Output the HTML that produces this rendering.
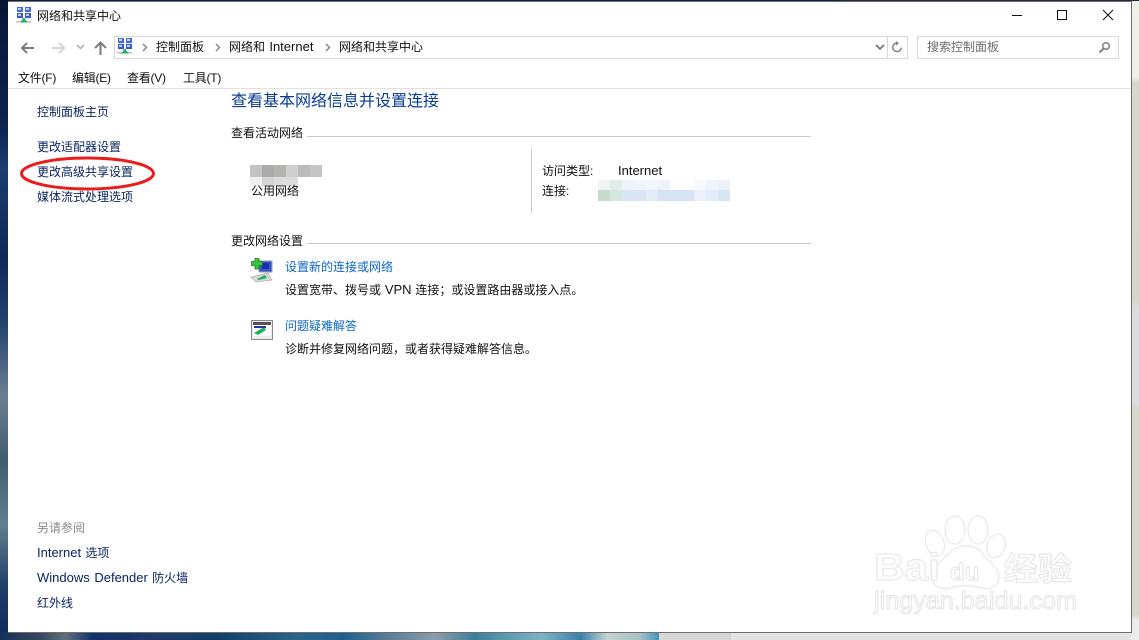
<!DOCTYPE html>
<html lang="zh-CN"><head><meta charset="utf-8"><style>
html,body{margin:0;padding:0}
body{width:1139px;height:640px;position:relative;overflow:hidden;background:#0c2048;font-family:"Liberation Sans","Noto Sans CJK SC",sans-serif;font-size:12px;color:#111}
div,span.t{position:absolute}
.t{white-space:nowrap;line-height:16px;font-size:12px}
.t i{font-style:normal;font-size:13px}
.n{color:#0a2560}
.l{color:#0a66c8}
.b{position:absolute}
</style></head><body>
<!-- wallpaper -->
<div style="left:0;top:0;width:8px;height:640px;background:linear-gradient(180deg,#071634 0,#0c2450 20%,#1a3e70 26%,#0e2a58 40%,#20406a 50%,#6a7f92 62%,#3f5d70 72%,#5f8090 82%,#1e3e68 92%,#0c2a58 100%)"></div>
<div style="left:0;top:632px;width:660px;height:8px;background:linear-gradient(90deg,#14305a 0,#36485e 6%,#61707c 10%,#12306a 14%,#22386a 24%,#104068 33%,#2d6488 45%,#1e5f90 52%,#5c7f96 59%,#8b9cac 66%,#3d8098 72%,#7fb4c6 82%,#3a7fa8 88%,#c7d2d2 92%,#a5c0c6 97%,#3d90b8 100%)"></div>
<div style="left:659px;top:632px;width:72px;height:8px;background:#d6d6d6"></div>
<div style="left:731px;top:632px;width:408px;height:8px;background:#e4e4e4"></div>
<div style="left:1131px;top:0;width:8px;height:640px;background:linear-gradient(180deg,#f0efe8 0,#f0efe8 12%,#d8d8cc 13%,#d6d6ca 47%,#dcdce0 48%,#dcdce0 63%,#d8d8cc 64%,#d8d8cc 96%,#ececec 97%)"></div>
<div style="left:840px;top:0;width:299px;height:1px;background:#1c2a3a"></div>
<!-- window -->
<div style="left:8px;top:1px;width:1123px;height:631px;background:#fff"></div>
<div style="left:1131px;top:1px;width:1px;height:632px;background:#6e6e6e"></div>
<div style="left:8px;top:632px;width:1124px;height:1px;background:#6e6e6e"></div>
<div style="left:8px;top:1px;width:1123px;height:1px;background:#6e6e6e"></div>

<!-- title icon -->
<svg class="b" style="left:16px;top:7px" width="16" height="16" viewBox="0 0 16 16">
<rect x="1" y="0" width="6" height="5" fill="#4a68d8"/><rect x="9" y="0" width="6" height="5" fill="#4a68d8"/><rect x="1" y="6" width="6" height="5" fill="#3a58d0"/><rect x="9" y="6" width="6" height="5" fill="#3a58d0"/>
<rect x="2" y="1" width="3" height="2" fill="#b8dcf8"/><rect x="10" y="1" width="3" height="2" fill="#b8dcf8"/><rect x="2" y="7" width="3" height="2" fill="#b8dcf8"/><rect x="10" y="7" width="3" height="2" fill="#b8dcf8"/>
<rect x="0" y="14" width="15" height="1.500" fill="#c0c0c0"/><path d="M4 15.500 L6.500 12.500 L6.500 11 L9 11 L9 12.500 L12 15.500Z" fill="#22b060"/></svg>
<span class="t" style="left:37px;top:8px">网络和共享中心</span>

<!-- window buttons -->
<div style="left:1012px;top:15px;width:10px;height:1px;background:#111"></div>
<div style="left:1057px;top:10px;width:8px;height:8px;border:1px solid #111"></div>
<svg class="b" style="left:1102px;top:9px" width="12" height="12" viewBox="0 0 12 12"><path d="M1 1L11 11M11 1L1 11" stroke="#111" stroke-width="1" fill="none"/></svg>

<!-- nav -->
<svg class="b" style="left:20px;top:41px" width="16" height="14" viewBox="0 0 16 14"><path d="M7 2L2 7L7 12M2 7H14" stroke="#7a7a7a" stroke-width="2" fill="none"/></svg>
<svg class="b" style="left:50px;top:41px" width="16" height="14" viewBox="0 0 16 14"><path d="M9 2L14 7L9 12M14 7H2" stroke="#d4d4d4" stroke-width="2" fill="none"/></svg>
<svg class="b" style="left:76px;top:44px" width="9" height="7" viewBox="0 0 9 7"><path d="M1 1L4.500 4.500L8 1" stroke="#a8a8a8" stroke-width="1.500" fill="none"/></svg>
<svg class="b" style="left:93px;top:41px" width="15" height="15" viewBox="0 0 15 15"><path d="M2 7L7.500 1.500L13 7M7.500 2V14" stroke="#7a7a7a" stroke-width="2" fill="none"/></svg>

<div style="left:114px;top:36px;width:772px;height:21px;border:1px solid #d9d9d9"></div>
<div style="left:887px;top:36px;width:20px;height:21px;border:1px solid #d9d9d9;border-left:none"></div>
<svg class="b" style="left:117px;top:38px" width="16" height="16" viewBox="0 0 16 16">
<rect x="1" y="0" width="6" height="5" fill="#4a68d8"/><rect x="9" y="0" width="6" height="5" fill="#4a68d8"/><rect x="1" y="6" width="6" height="5" fill="#3a58d0"/><rect x="9" y="6" width="6" height="5" fill="#3a58d0"/>
<rect x="2" y="1" width="3" height="2" fill="#b8dcf8"/><rect x="10" y="1" width="3" height="2" fill="#b8dcf8"/><rect x="2" y="7" width="3" height="2" fill="#b8dcf8"/><rect x="10" y="7" width="3" height="2" fill="#b8dcf8"/>
<rect x="0" y="14" width="15" height="1.500" fill="#c0c0c0"/><path d="M4 15.500 L6.500 12.500 L6.500 11 L9 11 L9 12.500 L12 15.500Z" fill="#22b060"/></svg>
<svg class="b" style="left:142px;top:43px" width="6" height="9" viewBox="0 0 6 9"><path d="M1 1L4.500 4.500L1 8" stroke="#8a8a8a" stroke-width="1.500" fill="none"/></svg>
<span class="t" style="left:156px;top:39px">控制面板</span>
<svg class="b" style="left:215px;top:43px" width="6" height="9" viewBox="0 0 6 9"><path d="M1 1L4.500 4.500L1 8" stroke="#8a8a8a" stroke-width="1.500" fill="none"/></svg>
<span class="t" style="left:229px;top:39px;word-spacing:1px">网络和 <i>Internet</i></span>
<svg class="b" style="left:325px;top:43px" width="6" height="9" viewBox="0 0 6 9"><path d="M1 1L4.500 4.500L1 8" stroke="#8a8a8a" stroke-width="1.500" fill="none"/></svg>
<span class="t" style="left:339px;top:39px">网络和共享中心</span>
<svg class="b" style="left:875px;top:44px" width="10" height="7" viewBox="0 0 10 7"><path d="M1 1L5 5L9 1" stroke="#707070" stroke-width="1.600" fill="none"/></svg>
<svg class="b" style="left:891px;top:41px" width="12" height="12" viewBox="0 0 12 12"><path d="M6 2A4.300 4.300 0 1 0 10.300 6.500" stroke="#808080" stroke-width="1.500" fill="none"/><path d="M5 0V4.500L8 2.200Z" fill="#808080"/></svg>

<div style="left:917px;top:36px;width:200px;height:21px;border:1px solid #d9d9d9"></div>
<span class="t" style="left:927px;top:39px;color:#6d6d6d">搜索控制面板</span>
<svg class="b" style="left:1098px;top:41px" width="13" height="13" viewBox="0 0 13 13"><circle cx="8" cy="5" r="3.300" stroke="#808080" stroke-width="1.500" fill="none"/><path d="M5.500 7.500L1.500 11.500" stroke="#808080" stroke-width="2"/></svg>

<!-- menu -->
<span class="t" style="left:18px;top:70px;letter-spacing:-.25px">文件(F)</span>
<span class="t" style="left:72px;top:70px;letter-spacing:-.25px">编辑(E)</span>
<span class="t" style="left:127px;top:70px;letter-spacing:-.25px">查看(V)</span>
<span class="t" style="left:183px;top:70px;letter-spacing:-.25px">工具(T)</span>
<div style="left:8px;top:88px;width:1123px;height:1px;background:#e2e2e2"></div>

<!-- left nav -->
<span class="t n" style="left:37px;top:104px">控制面板主页</span>
<span class="t n" style="left:37px;top:139px">更改适配器设置</span>
<span class="t n" style="left:37px;top:164px">更改高级共享设置</span>
<span class="t n" style="left:37px;top:189px">媒体流式处理选项</span>
<svg class="b" style="left:18px;top:155px" width="140" height="38" viewBox="0 0 140 38"><ellipse cx="69.500" cy="18.500" rx="66" ry="15.500" fill="none" stroke="#ec1c1c" stroke-width="3"/></svg>

<span class="t" style="left:37px;top:520px;color:#8a8a8a">另请参阅</span>
<span class="t n" style="left:37px;top:545px;word-spacing:1px"><i>Internet</i> 选项</span>
<span class="t n" style="left:37px;top:570px;word-spacing:1px"><i>Windows Defender</i> 防火墙</span>
<span class="t n" style="left:37px;top:595px">红外线</span>

<!-- main -->
<span class="t" style="left:231px;top:92px;font-size:16px;line-height:20px;color:#0a3c96">查看基本网络信息并设置连接</span>
<span class="t" style="left:231px;top:125px">查看活动网络</span>
<div style="left:307px;top:136px;width:504px;height:1px;background:#c8c8c8"></div>

<div style="left:250px;top:165px;width:12px;height:12px;background:#c4c2c2"></div>
<div style="left:262px;top:165px;width:12px;height:12px;background:#acabad"></div>
<div style="left:274px;top:165px;width:12px;height:12px;background:#b4b3b0"></div>
<div style="left:286px;top:165px;width:12px;height:12px;background:#cfcfd0"></div>
<div style="left:298px;top:165px;width:12px;height:12px;background:#bbbbbd"></div>
<div style="left:310px;top:165px;width:12px;height:12px;background:#c5c5c5"></div>
<div style="left:250px;top:177px;width:12px;height:9px;background:#f0f0f0"></div>
<div style="left:262px;top:177px;width:12px;height:9px;background:#d6d5d6"></div>
<div style="left:274px;top:177px;width:24px;height:9px;background:#dcdcdb"></div>
<span class="t" style="left:251px;top:183px">公用网络</span>

<div style="left:531px;top:149px;width:1px;height:64px;background:#c8c8c8"></div>
<span class="t" style="left:542px;top:163px">访问类型:</span>
<span class="t" style="left:618px;top:163px;font-size:13px">Internet</span>
<span class="t" style="left:542px;top:183px">连接:</span>

<div style="left:598px;top:180px;width:12px;height:10px;background:#f0f4f2"></div>
<div style="left:610px;top:180px;width:12px;height:10px;background:#e2ece8"></div>
<div style="left:622px;top:180px;width:12px;height:10px;background:#eef2f8"></div>
<div style="left:634px;top:180px;width:24px;height:10px;background:#f2f5fb"></div>
<div style="left:658px;top:180px;width:12px;height:10px;background:#eef2fa"></div>
<div style="left:694px;top:180px;width:12px;height:10px;background:#f8f9fd"></div>
<div style="left:706px;top:180px;width:12px;height:10px;background:#f1f4fb"></div>
<div style="left:718px;top:180px;width:12px;height:10px;background:#ebf1f9"></div>
<div style="left:598px;top:190px;width:12px;height:11px;background:#c4dccd"></div>
<div style="left:610px;top:190px;width:12px;height:11px;background:#d8e6e2"></div>
<div style="left:622px;top:190px;width:24px;height:11px;background:#d9e5f4"></div>
<div style="left:646px;top:190px;width:12px;height:11px;background:#e2ecf6"></div>
<div style="left:658px;top:190px;width:36px;height:11px;background:#d5e3f5"></div>
<div style="left:694px;top:190px;width:12px;height:11px;background:#ebf0f9"></div>
<div style="left:706px;top:190px;width:12px;height:11px;background:#e3ecf8"></div>
<div style="left:718px;top:190px;width:12px;height:11px;background:#d9e6f6"></div>

<span class="t" style="left:231px;top:233px">更改网络设置</span>
<div style="left:307px;top:243px;width:504px;height:1px;background:#c8c8c8"></div>

<svg class="b" style="left:250px;top:258px" width="26" height="26" viewBox="0 0 26 26">
<rect x="9" y="3" width="13" height="11" fill="#3a55c8" stroke="#8aa0c8"/><rect x="12" y="5" width="7" height="6" fill="#1830a8"/>
<path d="M5 0H9V3.500H12.500V7.500H9V11H5V7.500H1.500V3.500H5Z" fill="#3cc43c" stroke="#1d7a1d" stroke-width=".8"/>
<path d="M1 19L18 15L22 22L6 24Z" fill="#d8d8d8" stroke="#a0a0a0" stroke-width=".6"/><path d="M7 21L15 17L17 20L9 22Z" fill="#22b060"/></svg>
<span class="t l" style="left:285px;top:259px">设置新的连接或网络</span>
<span class="t" style="left:285px;top:282px;word-spacing:.5px">设置宽带、拨号或 <i>VPN</i> 连接；或设置路由器或接入点。</span>

<svg class="b" style="left:250px;top:319px" width="24" height="22" viewBox="0 0 24 22">
<rect x="1.500" y="1.500" width="21" height="19" fill="#ececec" stroke="#8a8a8a"/><rect x="3" y="3" width="18" height="3" fill="#555"/><rect x="3" y="6" width="18" height="11" fill="#fff"/>
<path d="M4 14L14 8L16 11L8 16Z" fill="#22b060"/><rect x="4" y="7" width="12" height="2" fill="#2038a0"/></svg>
<span class="t l" style="left:285px;top:318px">问题疑难解答</span>
<span class="t" style="left:285px;top:341px">诊断并修复网络问题，或者获得疑难解答信息。</span>

<!-- watermark -->
<svg class="b" style="left:870px;top:510px" width="210" height="110" viewBox="0 0 210 110">
<g fill="#fff" stroke="#e8e8e8" stroke-width="1.200">
<ellipse cx="85" cy="20" rx="10" ry="14"/><ellipse cx="108" cy="20" rx="10" ry="14"/>
<ellipse cx="65" cy="33" rx="9" ry="13" transform="rotate(-20 65 33)"/><ellipse cx="126" cy="36" rx="9" ry="12" transform="rotate(20 126 36)"/>
<path d="M96 36C80 36 76 48 66 56C56 66 64 82 80 78C90 75 102 75 112 78C128 82 134 66 124 56C114 48 112 36 96 36Z"/>
<text x="4" y="70" font-size="38" font-family="Liberation Sans" font-weight="bold" textLength="66" lengthAdjust="spacingAndGlyphs">Bai</text>
<text x="80" y="70" font-size="24" font-family="Liberation Sans" font-weight="bold">du</text>
<text x="134" y="70" font-size="32" font-family="Noto Sans CJK SC,sans-serif" font-weight="bold" textLength="68" lengthAdjust="spacingAndGlyphs">经验</text>
<text x="4" y="99" font-size="25" font-family="Liberation Sans" textLength="203" lengthAdjust="spacingAndGlyphs">jingyan.baidu.com</text>
</g></svg>
</body></html>
